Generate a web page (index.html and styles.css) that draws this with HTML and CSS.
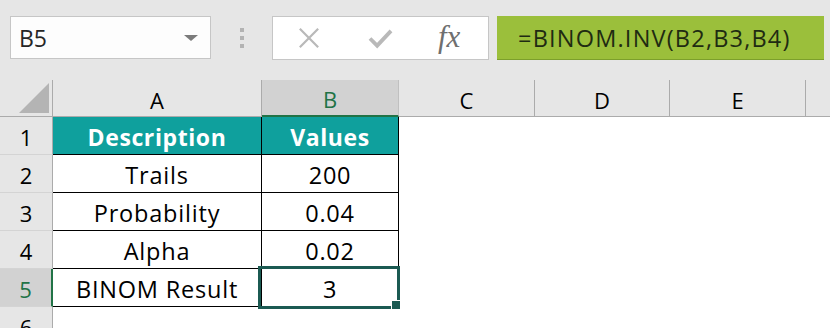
FILE: index.html
```html
<!DOCTYPE html>
<html>
    <head>
        <meta name="viewport" content="width=device-width, initial-scale=1.0">
        <title>BINOM.INV</title>
        <link rel="stylesheet" href="styles.css">
    </head>
    <body>
        <div class="toolbar">
            <div class="namebox">
                <span>B5</span>
                <span class="caret"></span>
            </div>
            <div class="grip"><i></i><i></i><i></i></div>
            <div class="fxbox">
                <svg class="icon cancel" width="24" height="24" viewBox="0 0 24 24">
                    <path d="M2 2 L22 22 M22 2 L2 22" stroke="#b9b9b9" stroke-width="2.4" fill="none"/>
                </svg>
                <svg class="icon enter" width="26" height="22" viewBox="0 0 26 22">
                    <path d="M2 11 L9.5 18.5 L24 3" stroke="#b9b9b9" stroke-width="4" fill="none"/>
                </svg>
                <span class="fx">fx</span>
            </div>
            <div class="formula">=BINOM.INV(B2,B3,B4)</div>
        </div>

        <div class="sheet">
            <!-- column headers -->
            <div class="hd corner"><span class="tri"></span></div>
            <div class="hd">A</div>
            <div class="hd active-col">B</div>
            <div class="hd">C</div>
            <div class="hd">D</div>
            <div class="hd">E</div>
            <div class="hd last"></div>

            <!-- row 1 -->
            <div class="rh">1</div>
            <div class="cell head">Description</div>
            <div class="cell head">Values</div>
            <div></div><div></div><div></div><div></div>

            <!-- row 2 -->
            <div class="rh">2</div>
            <div class="cell">Trails</div>
            <div class="cell">200</div>
            <div></div><div></div><div></div><div></div>

            <!-- row 3 -->
            <div class="rh">3</div>
            <div class="cell">Probability</div>
            <div class="cell">0.04</div>
            <div></div><div></div><div></div><div></div>

            <!-- row 4 -->
            <div class="rh">4</div>
            <div class="cell">Alpha</div>
            <div class="cell">0.02</div>
            <div></div><div></div><div></div><div></div>

            <!-- row 5 -->
            <div class="rh active-row">5</div>
            <div class="cell">BINOM Result</div>
            <div class="cell selected">3</div>
            <div></div><div></div><div></div><div></div>

            <!-- row 6, cut by the window edge -->
            <div class="rh">6</div>
            <div></div><div></div><div></div><div></div><div></div><div></div>
        </div>
    </body>
</html>
```

FILE: styles.css
```css
*{
    box-sizing: border-box;
}
body{
    margin: 0px;
    width: 830px;
    height: 328px;
    overflow: hidden;
    background-color: #ffffff;
    font-family: "Open Sans", Lato, sans-serif;
    color: #000000;
}
.toolbar{
    display: flex;
    align-items: flex-start;
    height: 80px;
    padding: 16px 0px 0px 10px;
    background-color: #e6e6e6;
}
.namebox{
    display: flex;
    align-items: center;
    justify-content: space-between;
    width: 201px;
    height: 43px;
    padding: 0px 12px 0px 8px;
    background-color: #fdfdfd;
    border: 1px solid #c6c6c6;
    font-size: 23px;
    color: #262626;
}
.caret{
    width: 0px;
    height: 0px;
    border-left: 7px solid transparent;
    border-right: 7px solid transparent;
    border-top: 6px solid #7b7b7b;
}
.grip{
    display: flex;
    flex-direction: column;
    align-items: center;
    gap: 4px;
    width: 61px;
    padding-top: 12px;
}
.grip i{
    display: block;
    width: 4px;
    height: 4px;
    background-color: #b3b3b3;
}
.fxbox{
    display: flex;
    align-items: center;
    width: 217px;
    height: 44px;
    padding-left: 25px;
    background-color: #ffffff;
    border: 1px solid #c6c6c6;
}
.cancel{
    width: 22px;
    height: 22px;
}
.enter{
    margin-left: 48px;
    width: 25px;
    height: 21px;
}
.fx{
    margin-left: 45px;
    font-family: "Liberation Serif", "DejaVu Serif", serif;
    font-style: italic;
    font-size: 31px;
    color: #6f6f6f;
    line-height: 1;
    padding-bottom: 4px;
}
.formula{
    display: flex;
    align-items: center;
    width: 327px;
    height: 44px;
    margin-left: 8px;
    padding-left: 21px;
    background-color: #9bbf3b;
    border-bottom: 1px solid #7c9f2b;
    font-size: 23.5px;
    letter-spacing: 1.2px;
    color: #1f2b12;
}
.sheet{
    display: grid;
    grid-template-columns: 53px 209px 137px 136px 135px 136px 24px;
    grid-template-rows: 37px repeat(6, 38px);
    font-size: 22px;
}
.sheet > div{
    display: flex;
    align-items: center;
    justify-content: center;
}
.hd{
    background-color: #e6e6e6;
    border-right: 1px solid #ababab;
    border-bottom: 1px solid #ababab;
    font-size: 22px;
    padding-top: 3px;
}
.hd.last{
    border-right: none;
}
.corner{
    position: relative;
}
.tri{
    position: absolute;
    right: 3px;
    bottom: 3px;
    width: 30px;
    height: 30px;
    background-color: #b4b4b4;
    clip-path: polygon(100% 0, 100% 100%, 0 100%);
}
.active-col{
    background-color: #d2d2d2;
    color: #217346;
    border-bottom: 2px solid #217346;
    border-right-color: #c0c0c0;
}
.rh{
    background-color: #e6e6e6;
    border-right: 1px solid #ababab;
    border-bottom: 1px solid #d4d4d4;
    padding-top: 2px;
}
.active-row{
    background-color: #d2d2d2;
    color: #217346;
    border-right: 2px solid #217346;
}
.cell{
    border-right: 1px solid #000000;
    border-bottom: 1px solid #000000;
    padding-top: 2px;
    font-size: 23.5px;
    letter-spacing: 0.8px;
}
.cell.head{
    background-color: #0fa09d;
    color: #ffffff;
    font-weight: bold;
    font-size: 23px;
    letter-spacing: 0.6px;
}
.selected{
    position: relative;
}
.selected::after{
    content: "";
    position: absolute;
    left: -4px;
    right: -2px;
    top: -3px;
    bottom: -3px;
    border: 3px solid #1b5a52;
}
.selected::before{
    content: "";
    position: absolute;
    right: -3px;
    bottom: -4px;
    width: 8px;
    height: 8px;
    background-color: #1b5a52;
    border: 1px solid #ffffff;
    z-index: 1;
}
```
